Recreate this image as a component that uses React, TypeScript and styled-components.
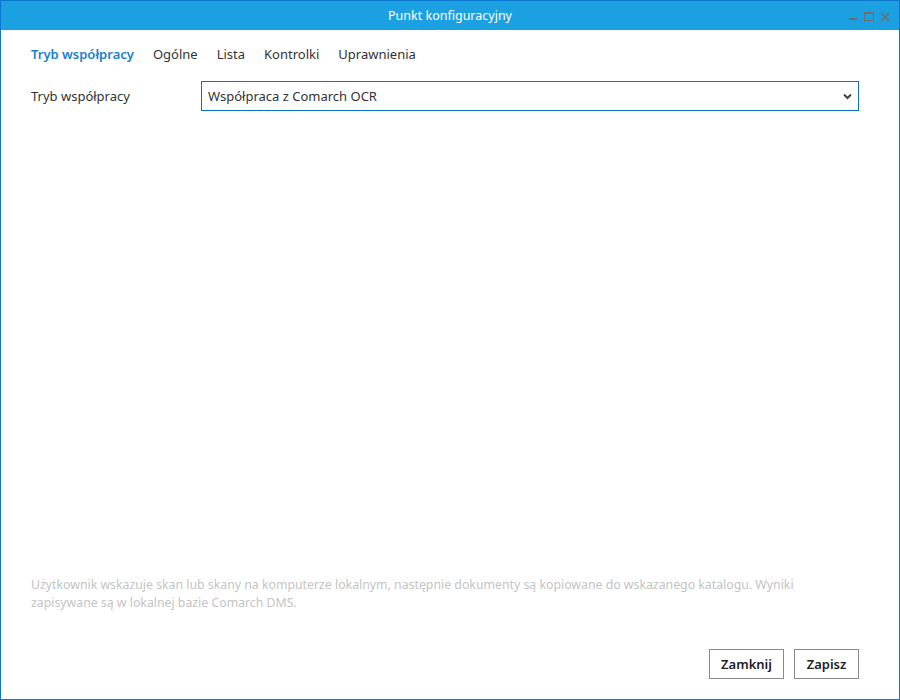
import React from "react";
import styled, { createGlobalStyle } from "styled-components";

const Global = createGlobalStyle`
  html, body { margin: 0; padding: 0; background: #fff; }
  body { font-family: "Noto Sans", "Open Sans", sans-serif; }
  * { box-sizing: border-box; }
`;

const Window = styled.div`
  width: 900px;
  height: 700px;
  border: 1px solid #0b78d0;
  border-top: none;
  display: flex;
  flex-direction: column;
  background: #fff;
`;

const TitleBar = styled.div`
  height: 30px;
  margin: 0 -1px;
  background: #1ba1e2;
  border-top: 1px solid #0b78d0;
  border-left: 1px solid #0b78d0;
  border-right: 1px solid #0b78d0;
  display: grid;
  grid-template-columns: 1fr auto 1fr;
  align-items: center;
  color: #fff;
  font-size: 12.5px;
`;

const Title = styled.div`
  grid-column: 2;
  padding-bottom: 1px;
`;

const Controls = styled.div`
  grid-column: 3;
  justify-self: end;
  display: flex;
  align-items: center;
  gap: 6px;
  padding-right: 9px;
  padding-top: 2px;
`;

const Body = styled.div`
  flex: 1;
  display: flex;
  flex-direction: column;
  padding: 14px 40px 20px 30px;
`;

const Tabs = styled.div`
  display: flex;
  gap: 19px;
  height: 20px;
  align-items: center;
`;

const Tab = styled.div<{ $active?: boolean }>`
  font-size: 13px;
  color: ${(p) => (p.$active ? "#1a7fcc" : "#333")};
  font-weight: ${(p) => (p.$active ? 600 : 400)};
`;

const FormRow = styled.div`
  margin-top: 17px;
  display: flex;
  align-items: center;
`;

const Label = styled.div`
  width: 170px;
  font-size: 13px;
  color: #333;
`;

const Select = styled.div`
  flex: 1;
  height: 30px;
  border: 1px solid #0b74c8;
  display: flex;
  align-items: center;
  justify-content: space-between;
  padding: 0 6px 0 6px;
  font-size: 13px;
  color: #333;
`;

const Spacer = styled.div`
  flex: 1;
`;

const Description = styled.div`
  font-size: 12.3px;
  line-height: 18px;
  color: #c4c4c4;
  padding-right: 30px;
`;

const Buttons = styled.div`
  margin-top: 37px;
  display: flex;
  justify-content: flex-end;
  gap: 10px;
`;

const Button = styled.button<{ $w: number }>`
  width: ${(p) => p.$w}px;
  height: 30px;
  background: #fff;
  border: 1px solid #8a8a8a;
  font-family: inherit;
  font-size: 13px;
  font-weight: 600;
  color: #222;
  padding: 0;
`;

export default function App() {
  return (
    <>
      <Global />
      <Window>
        <TitleBar>
          <Title>Punkt konfiguracyjny</Title>
          <Controls>
            <svg width="10" height="10" viewBox="0 0 10 10">
              <rect x="1" y="6" width="8" height="2" fill="#6e6e6e" />
            </svg>
            <svg width="10" height="10" viewBox="0 0 10 10">
              <rect x="0.5" y="0.5" width="9" height="8" fill="none" stroke="#6e6e6e" />
              <rect x="0" y="0" width="10" height="2" fill="#6e6e6e" />
            </svg>
            <svg width="10" height="10" viewBox="0 0 10 10">
              <path d="M1 1 L9 9 M9 1 L1 9" stroke="#6e6e6e" strokeWidth="1.6" />
            </svg>
          </Controls>
        </TitleBar>
        <Body>
          <Tabs>
            <Tab $active>Tryb współpracy</Tab>
            <Tab>Ogólne</Tab>
            <Tab>Lista</Tab>
            <Tab>Kontrolki</Tab>
            <Tab>Uprawnienia</Tab>
          </Tabs>
          <FormRow>
            <Label>Tryb współpracy</Label>
            <Select>
              <span>Współpraca z Comarch OCR</span>
              <svg width="9" height="7" viewBox="0 0 9 7">
                <path d="M1 1.5 L4.5 5 L8 1.5" fill="none" stroke="#444" strokeWidth="2" />
              </svg>
            </Select>
          </FormRow>
          <Spacer />
          <Description>
            Użytkownik wskazuje skan lub skany na komputerze lokalnym, następnie dokumenty są kopiowane do wskazanego katalogu. Wyniki zapisywane są w lokalnej bazie Comarch DMS.
          </Description>
          <Buttons>
            <Button $w={75}>Zamknij</Button>
            <Button $w={65}>Zapisz</Button>
          </Buttons>
        </Body>
      </Window>
    </>
  );
}
